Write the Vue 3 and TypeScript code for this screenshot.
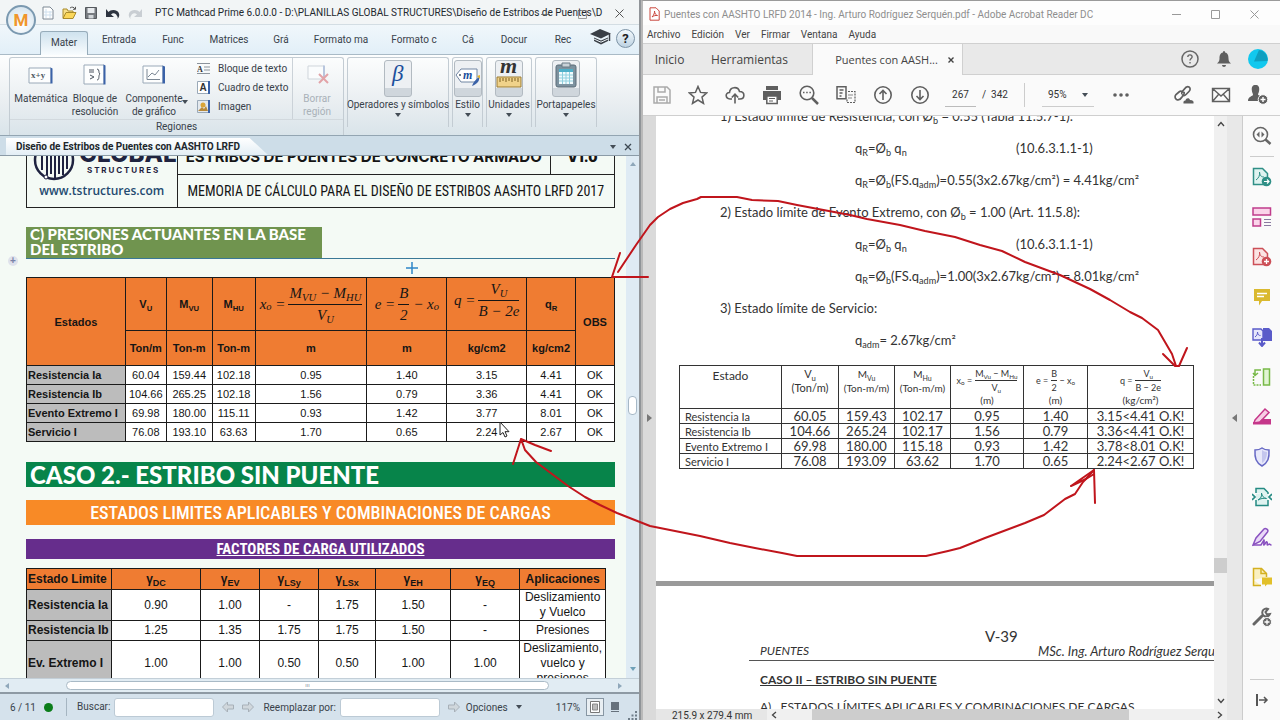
<script setup lang="ts">
interface RibbonTab { label: string; width: number; active?: boolean }

const tabs: RibbonTab[] = [
  { label: 'Mater', width: 48, active: true },
  { label: 'Entrada', width: 62 },
  { label: 'Func', width: 46 },
  { label: 'Matrices', width: 66 },
  { label: 'Grá', width: 38 },
  { label: 'Formato ma', width: 82 },
  { label: 'Formato c', width: 64 },
  { label: 'Cá', width: 44 },
  { label: 'Docur', width: 48 },
  { label: 'Rec', width: 50 },
]

const pressureCols: number[] = [99, 41, 46, 43, 112, 80, 80, 49, 39]
const pressureUnits: string[] = ['Ton/m', 'Ton-m', 'Ton-m', 'm', 'm', 'kg/cm2', 'kg/cm2']
const pressures: string[][] = [
  ['Resistencia Ia', '60.04', '159.44', '102.18', '0.95', '1.40', '3.15', '4.41', 'OK'],
  ['Resistencia Ib', '104.66', '265.25', '102.18', '1.56', '0.79', '3.36', '4.41', 'OK'],
  ['Evento Extremo I', '69.98', '180.00', '115.11', '0.93', '1.42', '3.77', '8.01', 'OK'],
  ['Servicio I', '76.08', '193.10', '63.63', '1.70', '0.65', '2.24', '2.67', 'OK'],
]

const factorCols: number[] = [85, 89, 59, 59, 57, 75, 69, 86]
const factorSubs: string[] = ['DC', 'EV', 'LSy', 'LSx', 'EH', 'EQ']
const factors: string[][] = [
  ['Resistencia Ia', '0.90', '1.00', '-', '1.75', '1.50', '-', 'Deslizamiento\ny Vuelco'],
  ['Resistencia Ib', '1.25', '1.35', '1.75', '1.75', '1.50', '-', 'Presiones'],
  ['Ev. Extremo I', '1.00', '1.00', '0.50', '0.50', '1.00', '1.00', 'Deslizamiento,\nvuelco y\npresiones'],
]

const menus: string[] = ['Archivo', 'Edición', 'Ver', 'Firmar', 'Ventana', 'Ayuda']

const bookCols: number[] = [102, 57, 56, 56, 73, 64, 106]
const bookRows: string[][] = [
  ['Resistencia Ia', '60.05', '159.43', '102.17', '0.95', '1.40', '3.15<4.41 O.K!'],
  ['Resistencia Ib', '104.66', '265.24', '102.17', '1.56', '0.79', '3.36<4.41 O.K!'],
  ['Evento Extremo I', '69.98', '180.00', '115.18', '0.93', '1.42', '3.78<8.01 O.K!'],
  ['Servicio I', '76.08', '193.09', '63.62', '1.70', '0.65', '2.24<2.67 O.K!'],
]

const share = (w: number, all: number[]): string =>
  (w / all.reduce((a, b) => a + b, 0)) * 100 + '%'
</script>

<template>
  <div class="desktop">
    <section class="mathcad" aria-label="PTC Mathcad Prime">
      <header class="mc-title">
        <button class="orb" aria-label="Menú">M</button>
        <div class="quick">
          <button aria-label="Nuevo">
            <svg width="12" height="14" viewBox="0 0 12 14"><path d="M1 1h7l3 3v9H1z" fill="#fff" stroke="#7d8894" /><path d="M4 3v9M8 5v7M2 6h8M2 9h8" stroke="#cfe0ee" /></svg>
          </button>
          <button aria-label="Abrir">
            <svg width="15" height="14" viewBox="0 0 15 14"><path d="M1 12V3h4l1 2h5v2" fill="#f6df8b" stroke="#a98b2c" /><path d="M1 12.500l3-6h10l-3 6z" fill="#fbd75a" stroke="#a98b2c" /><path d="M8 2c2-1.500 4-1 5 1M13.500 .8V3.300H11" fill="none" stroke="#555" /></svg>
          </button>
          <button aria-label="Guardar">
            <svg width="12" height="12" viewBox="0 0 12 12"><path d="M.5.500h11v11H.500z" fill="#777b80" stroke="#55595e" /><path d="M2.500 1h7v5h-7z" fill="#e8ebee" /><path d="M3.500 8h5v3.500h-5z" fill="#d3d7da" /></svg>
          </button>
          <button aria-label="Deshacer">
            <svg width="15" height="11" viewBox="0 0 15 11"><path d="M1 1v8h8L6 6.500c2-2 5-1.500 6 1.500 1 1 1 2 0 3 3-2 3-6 0-8S5 2 3.500 4z" fill="#2d3440" /></svg>
          </button>
          <button aria-label="Rehacer">
            <svg width="15" height="11" viewBox="0 0 15 11"><path d="M14 1v8H6l3-2.500C7 4.500 4 5 3 8c-1 1-1 2 0 3C0 9 0 5 3 3s7-1 8.500 1z" fill="#c9ced3" /></svg>
          </button>
        </div>
        <h1>PTC Mathcad Prime 6.0.0.0 - D:\PLANILLAS GLOBAL STRUCTURES\Diseño de Estribos de Puentes\D</h1>
        <button class="mc-min" aria-label="Minimizar"><svg width="9" height="9" viewBox="0 0 9 9"><path d="M0 4.500h9" stroke="#555" /></svg></button>
        <button class="mc-max" aria-label="Maximizar"><svg width="9" height="9" viewBox="0 0 9 9"><path d="M.5.500h8v8h-8z" stroke="#777" fill="none" /></svg></button>
        <button class="mc-close" aria-label="Cerrar">
          <svg width="9" height="9" viewBox="0 0 9 9"><path d="M.5.500l8 8M8.500.500l-8 8" stroke="#555" fill="none" /></svg>
        </button>
      </header>

      <nav class="mc-tabs">
        <button v-for="t in tabs" :key="t.label" :class="{ active: t.active }" :style="{ width: t.width + 'px' }">{{ t.label }}</button>
        <button class="cap" aria-label="Aprendizaje">
          <svg width="21" height="17" viewBox="0 0 21 17"><path d="M0 5L10 0l11 4.500L11 9.500z" fill="#3a3f46" /><path d="M4 8.500l7 3 7-3v3.500l-7 3.500-7-3.500z" fill="#3a3f46" /><path d="M4 10l7 3.200L18 10" stroke="#eef5fa" fill="none" /><path d="M19.500 5v7" stroke="#3a3f46" stroke-width="1.500" /></svg>
        </button>
        <button class="help" aria-label="Ayuda">?</button>
      </nav>

      <div class="ribbon">
        <fieldset class="group regions">
          <div class="tools">
            <button class="tool t1">
              <svg width="26" height="32" viewBox="0 0 26 32"><path d="M1 10h22v15H1z" fill="#fdfefe" stroke="#9aa9b8" /><path d="M22.500 9.500l2 1v15h-2z" fill="#3a62a8" /><text x="3" y="20" class="ico-serif">x+y</text></svg>
              <span>Matemática</span>
            </button>
            <button class="tool t2">
              <svg width="26" height="32" viewBox="0 0 26 32"><path d="M2 7h20v19H2z" fill="#fdfefe" stroke="#9aa9b8" /><path d="M21.500 6.500l2 1v19h-2z" fill="#3a62a8" /><path d="M7 12h5M7 14h5M8 17l4 2-4 2M15 11c3 0 1 4 3 5-2 1 0 6-3 6" stroke="#4c5560" fill="none" /></svg>
              <span>Bloque de resolución</span>
            </button>
            <button class="tool t3">
              <svg width="26" height="32" viewBox="0 0 26 32"><path d="M2 8h20v17H2z" fill="#fdfefe" stroke="#9aa9b8" /><path d="M21.500 7.500l2.500 1v17h-2.500z" fill="#3a62a8" /><path d="M6 11v10.500h13M7 19l4-4 3 2 4-5" stroke="#7b8794" fill="none" /></svg>
              <span>Componente de gráfico</span>
              <i class="caret"></i>
            </button>
            <div class="stack">
              <button><svg width="14" height="14" viewBox="0 0 14 14"><path d="M0 1.500h13M7 5h6M7 8h6M0 11.500h13" stroke="#8b939b" /><text x="0" y="9.500" class="ico-b">A</text></svg>Bloque de texto</button>
              <button><svg width="14" height="14" viewBox="0 0 14 14"><path d="M.5.500h11v12H.500z" fill="#fff" stroke="#9aa9b8" /><path d="M11 0h2v13h-2z" fill="#3a62a8" /><text x="2.500" y="10" class="ico-a">A</text></svg>Cuadro de texto</button>
              <button><svg width="14" height="14" viewBox="0 0 14 14"><path d="M.5.500h11v12H.500z" fill="#e4e9ee" stroke="#9aa9b8" /><path d="M11 0h2v13h-2z" fill="#3a62a8" /><path d="M1 11l4-4 2 2 2-3 2 5z" fill="#b88a3a" /><circle cx="6" cy="5" r="2.500" fill="#d9a437" /></svg>Imagen</button>
            </div>
            <button class="tool del" disabled>
              <svg width="26" height="32" viewBox="0 0 26 32"><path d="M4 8h16v13H4z" fill="#fafcfd" stroke="#cfd5db" /><path d="M19 7.500h2V21h-2z" fill="#b8c6de" /><path d="M15 16l9 9M24 16l-9 9" stroke="#e2a3a8" stroke-width="2" /></svg>
              <span>Borrar región</span>
            </button>
          </div>
          <legend>Regiones</legend>
        </fieldset>
        <div class="group g-ops">
          <button class="big"><b class="tile"><svg width="26" height="35" viewBox="0 0 26 35"><text x="7" y="20" class="beta">β</text></svg></b>Operadores y símbolos<i class="caret"></i></button>
        </div>
        <div class="group g-est">
          <button class="big"><b class="tile"><svg width="26" height="35" viewBox="0 0 26 35"><path d="M1 14l5-6h16v13H6z" fill="#fff" stroke="#7186a3" /><circle cx="5" cy="14" r="1" fill="#456" /><text x="8" y="18" class="em">m</text><path d="M24 16c1 4-2 7-7 9 1-3 3-6 7-9z" fill="#3a62a8" /><path d="M22 15l3-1v4z" fill="#e4b431" /></svg></b>Estilo<i class="caret"></i></button>
        </div>
        <div class="group g-uni">
          <button class="big"><b class="tile"><svg width="26" height="35" viewBox="0 0 26 35"><text x="4" y="12" class="unit">m</text><path d="M1 16h24v10H1z" fill="#f0d28a" stroke="#9c7c32" /><path d="M4 17v4M7 17v3M10 17v4M13 17v3M16 17v4M19 17v3M22 17v4" stroke="#7b5f20" /></svg></b>Unidades<i class="caret"></i></button>
        </div>
        <div class="group g-clip">
          <button class="big"><b class="tile"><svg width="26" height="35" viewBox="0 0 26 35"><rect x="3" y="4" width="20" height="22" rx="2" fill="#7d929f" stroke="#5c6d78" /><path d="M6 8h14v15H6z" fill="#f2fbfd" /><path d="M6 8h14v3H6z" fill="#4fb0c9" /><path d="M9.500 11v12M13 11v12M16.500 11v12M6 14h14M6 17h14M6 20h14" stroke="#8fd0df" /><path d="M9 2h8v4H9z" fill="#c9d2d8" stroke="#6a7a85" /></svg></b>Portapapeles<i class="caret"></i></button>
        </div>
      </div>

      <div class="docstrip">
        <button class="doctab">Diseño de Estribos de Puentes con AASHTO LRFD</button>
        <button class="ds-btn" aria-label="Lista de documentos"><i class="caret"></i></button>
        <button class="ds-btn" aria-label="Cerrar documento"><svg width="8" height="8" viewBox="0 0 8 8"><path d="M1 1l6 6M7 1L1 7" stroke="#3d4852" stroke-width="1.300" /></svg></button>
      </div>

      <div class="mc-body">
        <main class="sheet">
          <span class="grip">+</span>
          <table class="masthead">
            <colgroup><col style="width: 25.600%" /><col /><col style="width: 10.900%" /></colgroup>
            <tbody>
              <tr>
                <td rowspan="2" class="brand">
                  <div class="brandrow">
                    <svg width="42" height="42" viewBox="0 0 42 42"><circle cx="21" cy="21" r="19" fill="none" stroke="#1f2340" stroke-width="2.500" /><path d="M9 9v22M14 6v32M18 6v29M22 4v35M26 8v27M30 6v30M34 10v20" stroke="#1f2340" stroke-width="2" fill="none" /><circle cx="13" cy="38" r="2" fill="#fff" stroke="#1f2340" /></svg>
                    <div><strong>GLOBAL</strong><small>S T R U C T U R E S</small></div>
                  </div>
                  <a href="#">www.tstructures.com</a>
                </td>
                <td class="mh-title">ESTRIBOS DE PUENTES DE CONCRETO ARMADO</td>
                <td class="mh-ver">V1.0</td>
              </tr>
              <tr><td colspan="2" class="memo">MEMORIA DE CÁLCULO PARA EL DISEÑO DE ESTRIBOS AASHTO LRFD 2017</td></tr>
            </tbody>
          </table>

          <div class="section-c"><h2>C) PRESIONES ACTUANTES EN LA BASE DEL ESTRIBO</h2></div>
          <div class="crossline"><svg width="12" height="12" viewBox="0 0 12 12"><path d="M6 0v12M0 6h12" stroke="#2e86c8" stroke-width="1.500" /></svg></div>

          <table class="grid pressures">
            <colgroup><col v-for="(w, i) in pressureCols" :key="i" :style="{ width: share(w, pressureCols) }" /></colgroup>
            <thead>
              <tr class="symbols">
                <th rowspan="2">Estados</th>
                <th>V<sub>U</sub></th>
                <th>M<sub>VU</sub></th>
                <th>M<sub>HU</sub></th>
                <th class="math"><span class="eq">x<sub>o</sub>&nbsp;= <span class="frac"><span>M<sub>VU</sub> − M<sub>HU</sub></span><span>V<sub>U</sub></span></span></span></th>
                <th class="math"><span class="eq">e&nbsp;= <span class="frac"><span>B</span><span>2</span></span>&nbsp;− x<sub>o</sub></span></th>
                <th class="math high"><span class="eq">q&nbsp;= <span class="frac"><span>V<sub>U</sub></span><span>B − 2e</span></span></span></th>
                <th>q<sub>R</sub></th>
                <th rowspan="2">OBS</th>
              </tr>
              <tr class="units"><th v-for="(u, i) in pressureUnits" :key="i">{{ u }}</th></tr>
            </thead>
            <tbody>
              <tr v-for="r in pressures" :key="r[0]">
                <th scope="row">{{ r[0] }}</th>
                <td v-for="(c, i) in r.slice(1)" :key="i">{{ c }}</td>
              </tr>
            </tbody>
          </table>

          <h2 class="bar caso">CASO 2.- ESTRIBO SIN PUENTE</h2>
          <h3 class="bar estados">ESTADOS LIMITES APLICABLES Y COMBINACIONES DE CARGAS</h3>
          <h3 class="bar factores">FACTORES DE CARGA UTILIZADOS</h3>

          <table class="grid factors">
            <colgroup><col v-for="(w, i) in factorCols" :key="i" :style="{ width: share(w, factorCols) }" /></colgroup>
            <thead>
              <tr>
                <th class="lead">Estado Limite</th>
                <th v-for="s in factorSubs" :key="s" class="gamma">γ<sub>{{ s }}</sub></th>
                <th>Aplicaciones</th>
              </tr>
            </thead>
            <tbody>
              <tr v-for="r in factors" :key="r[0]">
                <th scope="row">{{ r[0] }}</th>
                <td v-for="(c, i) in r.slice(1)" :key="i">{{ c }}</td>
              </tr>
            </tbody>
          </table>
        </main>
        <div class="vbar"><i class="up"></i><i class="vthumb"></i><i class="down"></i></div>
      </div>

      <div class="hbar"><i class="left"></i><div class="hthumb">ııı</div><i class="right"></i></div>

      <footer class="status">
        <span class="pages">6 / 11</span>
        <i class="dot"></i>
        <label for="find">Buscar:</label>
        <input id="find" type="text" />
        <button class="arr" aria-label="Anterior"><svg width="12" height="12" viewBox="0 0 12 12"><path d="M.5 6l5-5v3h6v4h-6v3z" fill="#d0d7dc" stroke="#a7b0b8" /></svg></button>
        <button class="arr" aria-label="Siguiente"><svg width="12" height="12" viewBox="0 0 12 12"><path d="M11.500 6l-5-5v3h-6v4h6v3z" fill="#d0d7dc" stroke="#a7b0b8" /></svg></button>
        <label for="repl">Reemplazar por:</label>
        <input id="repl" type="text" />
        <button class="arr" aria-label="Reemplazar"><svg width="12" height="12" viewBox="0 0 12 12"><path d="M11.500 6l-5-5v3h-6v4h6v3z" fill="#d0d7dc" stroke="#a7b0b8" /></svg></button>
        <button class="opts">Opciones <i class="caret"></i></button>
        <span class="pct">117%</span>
        <button class="view on" aria-label="Vista de página"><svg width="10" height="12" viewBox="0 0 10 12"><path d="M.5.500h9v11h-9z" fill="#fff" stroke="#777" /><path d="M2.500 3h5v6h-5z" fill="#bbb" stroke="#888" /></svg></button>
        <button class="view" aria-label="Vista de borrador"><svg width="10" height="12" viewBox="0 0 10 12"><path d="M1 1h8v8H1z" fill="#66717c" /><path d="M1 10.500h8" stroke="#66717c" /></svg></button>
        <svg class="resize" width="9" height="9" viewBox="0 0 9 9"><path d="M7 0h2v2H7zM7 3.500h2v2H7zM7 7h2v2H7zM3.500 3.500h2v2h-2zM3.500 7h2v2h-2zM0 7h2v2H0z" fill="#6f7d89" /></svg>
      </footer>
    </section>

    <section class="acrobat" aria-label="Adobe Acrobat Reader DC">
      <header class="ac-title">
        <svg width="11" height="14" viewBox="0 0 11 14"><path d="M1 .8h6l3.200 3.200v9.200H1z" fill="#fff" stroke="#c9463d" /><path d="M3 10c2-2 2.600-4 2.500-6 .2 3 1.500 4 3 4.500-2-.3-4 .3-5.500 1.500z" fill="none" stroke="#c9463d" /></svg>
        <h1>Puentes con AASHTO LRFD 2014 - Ing. Arturo Rodríguez Serquén.pdf - Adobe Acrobat Reader DC</h1>
        <button aria-label="Minimizar"><svg width="9" height="9" viewBox="0 0 9 9"><path d="M0 4.500h9" stroke="#999" /></svg></button>
        <button aria-label="Maximizar"><svg width="9" height="9" viewBox="0 0 9 9"><path d="M.5.500h8v8h-8z" stroke="#999" fill="none" /></svg></button>
        <button aria-label="Cerrar"><svg width="9" height="9" viewBox="0 0 9 9"><path d="M.5.500l8 8M8.500.500l-8 8" stroke="#999" /></svg></button>
      </header>
      <nav class="ac-menu"><button v-for="m in menus" :key="m">{{ m }}</button></nav>
      <nav class="ac-tabs">
        <button class="home">Inicio</button>
        <button class="toolsTab">Herramientas</button>
        <div class="file"><button>Puentes con AASH...</button><button aria-label="Cerrar pestaña"><svg width="6" height="6" viewBox="0 0 6 6"><path d="M.5.500l5 5M5.500.500l-5 5" stroke="#444" stroke-width="1.400" /></svg></button></div>
        <div class="account">
          <button aria-label="Ayuda"><svg width="20" height="20" viewBox="0 0 20 20"><circle cx="10" cy="10" r="8" fill="none" stroke="#666" stroke-width="1.500" /><path d="M7.800 8c.2-3 4.600-2.600 4.300 0-.2 1.500-2.100 1.500-2.100 3.500M10 13v1.500" fill="none" stroke="#666" stroke-width="1.400" /></svg></button>
          <button aria-label="Notificaciones"><svg width="16" height="18" viewBox="0 0 16 18"><path d="M8 1c1 0 1 1 1 1.500 3 .7 3.500 3 3.500 6 0 3 1 3.500 2.500 5H1c1.500-1.500 2.500-2 2.500-5 0-3 .5-5.300 3.500-6C7 2 7 1 8 1z" fill="#5f5f5f" /><path d="M6 15h4c0 2.500-4 2.500-4 0z" fill="#5f5f5f" /></svg></button>
          <button aria-label="Cuenta"><svg width="20" height="20" viewBox="0 0 20 20"><circle cx="10" cy="10" r="10" fill="#12c8ee" /><path d="M11 1a9.500 9.500 0 0 1 8.500 11L6 12.500z" fill="#0f9fc0" /></svg></button>
        </div>
      </nav>
      <div class="ac-toolbar">
        <button aria-label="Guardar"><svg width="18" height="18" viewBox="0 0 18 18"><path d="M1 1h13l3 3v13H1z" fill="none" stroke="#aaa" stroke-width="1.500" /><path d="M5 1v5h7V1M4 17v-6h10v6M6 14h6" fill="none" stroke="#aaa" stroke-width="1.500" /></svg></button>
        <button aria-label="Favorito"><svg width="20" height="20" viewBox="0 0 20 20"><path d="M10 1.500l2.500 5.900 6.300.5-4.800 4.200 1.500 6.300L10 15l-5.500 3.400L6 12.100 1.200 7.900l6.300-.5z" fill="none" stroke="#5f5f5f" stroke-width="1.500" /></svg></button>
        <button aria-label="Subir"><svg width="20" height="20" viewBox="0 0 20 20"><path d="M7 14H5C0 13.500 0 7.500 4.500 7.500 5 1.500 13 1 14.500 6.500c6 0 5.500 7.500.5 7.500h-2" fill="none" stroke="#5f5f5f" stroke-width="1.600" /><path d="M10 18.500V10M6.800 12.500L10 9.200l3.200 3.300" fill="none" stroke="#5f5f5f" stroke-width="1.600" /></svg></button>
        <button aria-label="Imprimir"><svg width="20" height="20" viewBox="0 0 20 20"><path d="M4 1h12v4H4zM1 6h18v9h-3v-3H4v3H1z" fill="#5f5f5f" /><path d="M4.800 11h10.400v7.500H4.800z" fill="#fff" stroke="#5f5f5f" stroke-width="1.500" /><path d="M7 13.500h6M7 16h4" stroke="#5f5f5f" /></svg></button>
        <button aria-label="Buscar"><svg width="20" height="20" viewBox="0 0 20 20"><circle cx="8" cy="8" r="6.800" fill="none" stroke="#5f5f5f" stroke-width="1.600" /><path d="M13 13l6 6" stroke="#5f5f5f" stroke-width="2.500" /><path d="M4 7.500h1.500M7.200 7.500h1.500M10.400 7.500h1.500" stroke="#5f5f5f" stroke-width="1.500" /></svg></button>
        <button aria-label="Comparar"><svg width="20" height="20" viewBox="0 0 20 20"><path d="M1 1.800h9v12H1zM3.500 5h4M3.500 8h3M3.500 11h2" fill="none" stroke="#5f5f5f" stroke-width="1.500" /><path d="M12 6.500h7v11h-8v-3" fill="none" stroke="#5f5f5f" stroke-width="1.200" stroke-dasharray="2 1" /><path d="M12 10h5M12 13h4" stroke="#888" /></svg></button>
        <button aria-label="Página anterior"><svg width="20" height="20" viewBox="0 0 20 20"><circle cx="10" cy="10" r="8.200" fill="none" stroke="#5f5f5f" stroke-width="1.600" /><path d="M10 15V5.800M6.500 9L10 5.500 13.500 9" fill="none" stroke="#5f5f5f" stroke-width="1.600" /></svg></button>
        <button aria-label="Página siguiente"><svg width="20" height="20" viewBox="0 0 20 20"><circle cx="10" cy="10" r="8.200" fill="none" stroke="#5f5f5f" stroke-width="1.600" /><path d="M10 5v9.200M6.500 11l3.500 3.500 3.500-3.500" fill="none" stroke="#5f5f5f" stroke-width="1.600" /></svg></button>
        <input class="page" aria-label="Página" value="267" />
        <span class="total">/&nbsp; 342</span>
        <div class="zoom"><select aria-label="Zoom"><option>95%</option></select><i class="caret"></i></div>
        <button class="more" aria-label="Más"><svg width="16" height="4" viewBox="0 0 16 4"><circle cx="2" cy="2" r="1.800" fill="#5f5f5f" /><circle cx="8" cy="2" r="1.800" fill="#5f5f5f" /><circle cx="14" cy="2" r="1.800" fill="#5f5f5f" /></svg></button>
        <div class="sharing">
          <button aria-label="Vínculo"><svg width="20" height="20" viewBox="0 0 20 20"><g fill="none" stroke="#5f5f5f" stroke-width="1.700"><path d="M8 9c-1-2 1-3 2-4.500C12 1.500 13.500 1 15 2s1.500 3 0 4.500L12 9.500c-1.500 1.500-3 1-4 0" /><path d="M10 7c1 2-1 3.500-2 5-1.500 2.500-3.500 3.500-5.500 2.500C.5 13 .8 11 2 9.500L5 7c1.500-1.300 3-1 4.500.5" /></g><path d="M9.500 18.500c-.5-3 1.500-3 2-3 .5-3 4-3 4.500-.5 3 0 4 1.500 3.500 3.500z" fill="#5f5f5f" /></svg></button>
          <button aria-label="Correo"><svg width="20" height="16" viewBox="0 0 20 16"><path d="M1.500 1.500h17v13h-17zM1.500 1.500L10 9l8.500-7.500M1.500 14.500l6-7M18.500 14.500l-6-7" fill="none" stroke="#5f5f5f" stroke-width="1.400" /></svg></button>
          <button aria-label="Compartir"><svg width="20" height="20" viewBox="0 0 20 20"><path d="M7.500 0c3 0 4 2 3.700 5C11 8 10 8.500 10 9.500c0 1 2 1 3.500 2L10 16H0c0-5 5-4.500 5-6.500C5 8.500 4 8 3.800 5 3.500 2 4.500 0 7.500 0z" fill="#5f5f5f" /><circle cx="15" cy="14.500" r="4.800" fill="#5f5f5f" stroke="#fafafa" /><path d="M15 12v5M12.500 14.500h5" stroke="#fff" stroke-width="1.400" /></svg></button>
        </div>
      </div>

      <div class="ac-body">
        <button class="gutter gl" aria-label="Mostrar panel"><i></i></button>
        <div class="viewer">
          <div class="viewrow">
            <article class="pdf">
              <div class="pg one">
                <p>1) Estado límite de Resistencia, con Ø<sub>b</sub> = 0.55 (Tabla 11.5.7-1):</p>
                <p class="f"><span>q<sub>R</sub>=Ø<sub>b</sub> q<sub>n</sub></span><span>(10.6.3.1.1-1)</span></p>
                <p class="f">q<sub>R</sub>=Ø<sub>b</sub>(FS.q<sub>adm</sub>)=0.55(3x2.67kg/cm²) = 4.41kg/cm²</p>
                <p>2) Estado límite de Evento Extremo, con Ø<sub>b</sub> = 1.00 (Art. 11.5.8):</p>
                <p class="f"><span>q<sub>R</sub>=Ø<sub>b</sub> q<sub>n</sub></span><span>(10.6.3.1.1-1)</span></p>
                <p class="f">q<sub>R</sub>=Ø<sub>b</sub>(FS.q<sub>adm</sub>)=1.00(3x2.67kg/cm²) = 8.01kg/cm²</p>
                <p>3) Estado límite de Servicio:</p>
                <p class="f">q<sub>adm</sub>= 2.67kg/cm²</p>
                <table class="book">
                  <colgroup><col v-for="(w, i) in bookCols" :key="i" :style="{ width: share(w, bookCols) }" /></colgroup>
                  <thead>
                    <tr>
                      <th>Estado</th>
                      <th>V<sub>u</sub><br />(Ton/m)</th>
                      <th>M<sub>Vu</sub><br />(Ton-m/m)</th>
                      <th>M<sub>Hu</sub><br />(Ton-m/m)</th>
                      <th class="bm"><span class="eq">x<sub>o</sub>&nbsp;= <span class="frac"><span>M<sub>Vu</sub> − M<sub>Hu</sub></span><span>V<sub>u</sub></span></span></span>(m)</th>
                      <th class="bm"><span class="eq">e&nbsp;= <span class="frac"><span>B</span><span>2</span></span>&nbsp;− x<sub>o</sub></span>(m)</th>
                      <th class="bm"><span class="eq">q&nbsp;= <span class="frac"><span>V<sub>u</sub></span><span>B − 2e</span></span></span>(kg/cm²)</th>
                    </tr>
                  </thead>
                  <tbody>
                    <tr v-for="r in bookRows" :key="r[0]"><td v-for="(c, i) in r" :key="i">{{ c }}</td></tr>
                  </tbody>
                </table>
              </div>
              <div class="pg two">
                <p class="num">V-39</p>
                <div class="running"><em>PUENTES</em><em>MSc. Ing. Arturo Rodríguez Serquén</em></div>
                <h2>CASO II – ESTRIBO SIN PUENTE</h2>
                <p class="next">A) &nbsp; ESTADOS LÍMITES APLICABLES Y COMBINACIONES DE CARGAS</p>
              </div>
            </article>
            <div class="ac-vbar">
              <svg width="8" height="6" viewBox="0 0 8 6"><path d="M1 5l3-3.500L7 5" fill="none" stroke="#444" stroke-width="1.300" /></svg>
              <i></i>
              <svg width="8" height="6" viewBox="0 0 8 6"><path d="M1 1l3 3.500L7 1" fill="none" stroke="#444" stroke-width="1.300" /></svg>
            </div>
          </div>
          <div class="ac-hbar">
            <span>215.9 x 279.4 mm</span>
            <button aria-label="Izquierda"><svg width="6" height="8" viewBox="0 0 6 8"><path d="M5 1L1.500 4 5 7" fill="none" stroke="#444" stroke-width="1.300" /></svg></button>
            <i></i>
            <button aria-label="Derecha"><svg width="6" height="8" viewBox="0 0 6 8"><path d="M1 1l3.500 3L1 7" fill="none" stroke="#444" stroke-width="1.300" /></svg></button>
          </div>
        </div>
        <button class="gutter gr" aria-label="Ocultar panel"><i></i></button>
        <aside class="rail">
          <button aria-label="Buscar herramientas"><svg width="20" height="20" viewBox="0 0 20 20"><circle cx="8.500" cy="8.500" r="7" fill="none" stroke="#666" stroke-width="1.600" /><path d="M13.500 13.500L18.500 18" stroke="#666" stroke-width="2.500" /><path d="M7.500 5.500v6l-3-3zM9.500 5.500v6l3-3z" fill="#666" /></svg></button>
          <hr />
          <button aria-label="Exportar PDF"><svg width="20" height="20" viewBox="0 0 20 20"><path d="M1.500 1.500h9l5 5v11h-14z" fill="#dff3f0" stroke="#2f8f86" stroke-width="1.500" /><path d="M4 13c3-2 4-5 3.500-8 .5 4 2 5 4.500 5" fill="none" stroke="#2f8f86" /><circle cx="14.500" cy="14.500" r="4.800" fill="#2f8f86" /><path d="M12 14.500h5M15 12.500l2 2-2 2" fill="none" stroke="#fff" stroke-width="1.200" /></svg></button>
          <button aria-label="Organizar páginas"><svg width="20" height="20" viewBox="0 0 20 20"><path d="M1 1h17.500v7H1zM1 12h7.500v7H1z" fill="#fbd4ea" stroke="#c03c8c" stroke-width="1.500" /><path d="M12 12.500h7M12 15.500h7M12 18.500h7" stroke="#8a7aa0" /></svg></button>
          <button aria-label="Crear PDF"><svg width="20" height="20" viewBox="0 0 20 20"><path d="M1.500 1.500h9l5 5v11h-14z" fill="#fbe3e3" stroke="#cc4f57" stroke-width="1.500" /><path d="M4 13c3-2 4-5 3.500-8 .5 4 2 5 4.500 5" fill="none" stroke="#cc4f57" /><circle cx="14.500" cy="14.500" r="4.800" fill="#cc4f57" /><path d="M14.500 12v5M12 14.500h5" stroke="#fff" stroke-width="1.300" /></svg></button>
          <button aria-label="Comentar"><svg width="20" height="20" viewBox="0 0 20 20"><path d="M2 2h16v12h-8l-3 4.500V14H2z" fill="#dab92f" /><path d="M5 6.500h10M5 9.500h7" stroke="#fff" stroke-width="1.400" /></svg></button>
          <button aria-label="Combinar"><svg width="20" height="20" viewBox="0 0 20 20"><path d="M11 1h6l3 3v10h-9z" fill="#5a5bc9" /><path d="M1 2h8l2 2v9H1z" fill="#e6e6fb" stroke="#5a5bc9" stroke-width="1.400" /><path d="M3 10c2-1.500 2.500-3 2.500-5 .3 3 1.500 3.500 3 3.500" fill="none" stroke="#5a5bc9" /><path d="M10 11v7M7 15.500l3 3.500 3-3.500" fill="none" stroke="#5a5bc9" stroke-width="2" /></svg></button>
          <button aria-label="Rotar"><svg width="20" height="20" viewBox="0 0 20 20"><path d="M11.500 2h6v16h-6z" fill="#e1f5d3" stroke="#78b948" stroke-width="1.500" /><path d="M1.500 9v9H9" fill="none" stroke="#78b948" stroke-width="1.500" stroke-dasharray="2 1" /><path d="M9 3H3v5M1 6l2 2.500L6 6" fill="none" stroke="#78b948" stroke-width="1.500" /></svg></button>
          <button aria-label="Censurar"><svg width="20" height="20" viewBox="0 0 20 20"><path d="M3 13L13 2l4 3.500L8 15l-6 1z" fill="#f8cde4" stroke="#c5378a" stroke-width="1.500" /><path d="M1 15h6l3-3h9v5.500H1z" fill="#c5378a" /></svg></button>
          <button aria-label="Proteger"><svg width="20" height="20" viewBox="0 0 20 20"><path d="M10 1c2 1.500 4.500 2 7 2 .5 8-1 12.500-7 16C4 15.500 2.500 11 3 3c2.500 0 5-.5 7-2z" fill="#e7e8fa" stroke="#6668c4" stroke-width="1.500" /><path d="M10 3v13c3-2 5-5 5-11-2 0-3.500-.8-5-2z" fill="#c4c6ee" /></svg></button>
          <button aria-label="Comprimir"><svg width="20" height="20" viewBox="0 0 20 20"><path d="M4 6V1.500h8l4 4V7M4 13v5.500h12V13" fill="#dff3f0" stroke="#258b83" stroke-width="1.500" /><path d="M4 7h12v6H4z" fill="#dff3f0" /><path d="M0 7l3 3-3 3M20 7l-3 3 3 3" fill="none" stroke="#258b83" stroke-width="1.700" /><path d="M6 13c3-1.500 4-4 3.500-7 .5 3 2 5 5 5.500-3-.5-6 0-8.500 1.500z" fill="none" stroke="#258b83" /></svg></button>
          <button aria-label="Rellenar y firmar"><svg width="20" height="20" viewBox="0 0 20 20"><path d="M1 18l3-7L12 2c1.500-1.500 5 1 3.500 3L8 14.500z" fill="#ead9f8" stroke="#8a52c0" stroke-width="1.500" /><path d="M1 18h8l3-5c1 1-1 5 0 5s2-4 3-3-.5 3 .5 3 1.500-1.500 2-1 .5 1 2 1" fill="none" stroke="#8a52c0" stroke-width="1.500" /></svg></button>
          <button aria-label="Enviar comentarios"><svg width="20" height="20" viewBox="0 0 20 20"><path d="M1.500 13V1.500h8l5 5V10M1.500 13v5.500H9" fill="#faf0c0" stroke="#d4b020" stroke-width="1.500" /><path d="M9 1.500v5h5.500" fill="none" stroke="#d4b020" stroke-width="1.500" /><path d="M10 10.500h10v7h-5l-2 2v-2h-3z" fill="#e2c02a" /></svg></button>
          <button aria-label="Más herramientas"><svg width="20" height="20" viewBox="0 0 20 20"><path d="M2 17L10 9" stroke="#666" stroke-width="3" stroke-linecap="round" /><path d="M16 2a4 4 0 1 0 2 5l-3 .5L13.500 5z" fill="none" stroke="#666" stroke-width="2" /><circle cx="15" cy="15" r="4.500" fill="#666" stroke="#fafafa" /><path d="M15 12.500v5M12.500 15h5" stroke="#fff" stroke-width="1.300" /></svg></button>
          <span class="fill"></span>
          <hr />
          <button aria-label="Contraer"><svg width="14" height="14" viewBox="0 0 14 14"><path d="M2 1v12" stroke="#555" stroke-width="2" /><path d="M4 7h8M9 4l3 3-3 3" fill="none" stroke="#555" stroke-width="1.500" /></svg></button>
        </aside>
      </div>
    </section>

    <svg class="ink" viewBox="0 0 1280 720" preserveAspectRatio="none" aria-hidden="true">
      <g fill="none" stroke="#c0151c" stroke-width="2" stroke-linecap="round" stroke-linejoin="round">
        <path d="M620 253L612 277L648 277M618 272L636 245L650 225L658 217L670 209L683 203L697 199L701 197H737L752 200L778 201L797 205L850 215L867 219L900 225L925 231L955 237L980 245L1002 251L1025 262L1060 275L1090 289L1110 300L1130 312L1142 318L1158 330L1165 342L1172 354L1176 366" />
        <path d="M1163 354L1175 366H1179L1187 348" />
        <path d="M513 464L521 439L535 445L551 451M521 439L525 450L536 462L556 477L568 486L585 497L600 505L617 513L650 526L690 534L700 536L730 543L755 548L782 553L797 556H926L948 551L960 548L985 538L1025 523L1044 515L1065 499L1075 494L1083 482L1094 470" />
        <path d="M1071 486L1094 470L1095 503M1071 486L1086 479L1094 474" />
      </g>
      <path d="M500 422v13l3-2.500 2 4.500 2-1-2-4.300h4z" fill="#fff" stroke="#222" stroke-width="1" />
    </svg>
  </div>
</template>

<style>
html, body { margin: 0; }
</style>

<style scoped>
* { box-sizing: border-box; }
.desktop { position: relative; display: grid; grid-template-columns: 641fr 639fr; height: 100vh; overflow: hidden; font-family: Roboto, "Open Sans", sans-serif; font-size: 10px; color: #39424b; background: #c8c8c8; }
button, input, select { font: inherit; color: inherit; background: none; border: 0; padding: 0; margin: 0; }
button { display: inline-flex; align-items: center; justify-content: center; white-space: nowrap; }
h1, h2, h3, p { margin: 0; font-weight: 400; }
svg { flex: none; display: block; }
sub { font-size: 70%; line-height: 0; vertical-align: baseline; position: relative; top: 3px; }
.caret { display: inline-block; flex: none; border: 3px solid transparent; border-top: 4px solid #444d56; border-bottom: 0; }
.ink { position: absolute; inset: 0; width: 100%; height: 100%; pointer-events: none; }

/* Mathcad window */
.mathcad { display: flex; flex-direction: column; min-width: 0; min-height: 0; border-right: 2px solid #909498; background: #e6f0f6; }
.mc-title { position: relative; display: flex; align-items: center; height: 25px; flex: none; background: #f2f5f6; border-bottom: 1px solid #d3dde3; padding: 2px 14px 0 42px; }
.orb { position: absolute; left: 6px; top: 5px; width: 30px; height: 30px; border-radius: 50%; border: 2px solid #7b99b0; background: radial-gradient(circle at 50% 70%, #fff, #cfe0ec); color: #f0962c; font-weight: 700; font-size: 17px; z-index: 1; }
.quick { display: flex; align-items: center; gap: 8px; width: 113px; flex: none; }
.mc-title h1 { flex: 1; min-width: 0; font-size: 10px; line-height: 16px; color: #22282e; white-space: nowrap; }
.mc-close { width: 12px; margin-left: 16px; }
.mc-min, .mc-max { position: absolute; top: 10px; opacity: .7; }
.mc-min { right: 89px; }
.mc-max { right: 52px; }
.mc-tabs { display: flex; height: 30px; flex: none; padding-left: 40px; background: linear-gradient(#f0f7fb, #e2eff8); border-bottom: 1px solid #a9bac6; align-items: flex-end; }
.mc-tabs button { height: 29px; overflow: hidden; }
.mc-tabs .active { height: 24px; padding-bottom: 3px; border: 1px solid #97acba; border-bottom: 0; border-radius: 3px 3px 0 0; background: linear-gradient(#cfe2ee, #f8fcfe); margin-bottom: -1px; }
.mc-tabs .cap { width: 24px; padding-bottom: 4px; }
.mc-tabs .help { width: 19px; height: 19px; margin: 0 0 6px 4px; border: 1px solid #7c93a6; border-radius: 50%; background: linear-gradient(#f5fafd, #bdd2e2); font-weight: 700; font-size: 13px; color: #222; }
.ribbon { display: flex; height: 81px; flex: none; gap: 3px; padding: 2px 0 0 9px; background: linear-gradient(#fdfefe, #e9eef1 60%, #d9e4ea); border-bottom: 1px solid #93a5b2; }
.group { border: 1px solid #c3ccd3; border-bottom: 0; border-radius: 3px 3px 0 0; margin: 0; padding: 0; min-width: 0; height: 70px; display: flex; justify-content: center; }
.regions { width: 335px; height: 78px; display: flex; flex-direction: column; justify-content: flex-start; }
.regions legend { order: 2; float: left; width: 100%; padding: 0; text-align: center; line-height: 14px; border-top: 1px solid #d2d9de; }
.tools { display: flex; height: 61px; }
.tool { flex-direction: column; justify-content: flex-start; align-items: center; white-space: normal; line-height: 13px; text-align: center; position: relative; }
.t1 { width: 62px; }
.t2 { width: 46px; }
.t3 { width: 74px; padding: 0 8px 0 6px; }
.t3 .caret { position: absolute; right: 4px; bottom: 15px; }
.tool svg { margin-bottom: 2px; }
.stack { display: flex; flex-direction: column; width: 101px; padding: 1px 0 0 5px; border-right: 1px solid #cbd2d8; }
.stack button { height: 19px; gap: 7px; justify-content: flex-start; }
.del { width: 48px; color: #a9b1b8; }
.g-ops { width: 102px; }
.g-est { width: 31px; }
.g-uni { width: 46px; }
.g-clip { width: 62px; }
.big { flex-direction: column; justify-content: flex-start; padding-top: 2px; line-height: 15px; }
.tile { display: block; width: 28px; height: 37px; border: 1px solid #b2bac1; border-radius: 3px; background: linear-gradient(#edf0f3 78%, #cfd6dc 78%); }
.big .caret { margin-top: 1px; }
.ico-serif { font: 700 9px "Liberation Serif", serif; fill: #4c5560; }
.ico-b { font: 700 8px "Liberation Serif", serif; fill: #333; }
.ico-a { font: 700 10px "Liberation Sans", sans-serif; fill: #333; }
.beta { font: italic 23px "Liberation Serif", serif; fill: #1c4f9c; }
.em { font: italic 700 12px "Liberation Serif", serif; fill: #1c4f9c; }
.unit { font: italic 700 22px "Liberation Serif", serif; fill: #333; }
.docstrip { display: flex; height: 20px; flex: none; align-items: flex-end; background: #cddde8; border-bottom: 1px solid #8b9ba7; padding-right: 4px; }
.doctab { height: 17px; width: 262px; margin-left: 6px; margin-right: auto; padding-left: 10px; justify-content: flex-start; background: linear-gradient(#fff, #e3eef5); clip-path: polygon(0 0, 93% 0, 100% 100%, 0 100%); font-weight: 700; color: #20262b; }
.ds-btn { width: 15px; height: 17px; }

.mc-body { flex: 1; min-height: 0; display: flex; }
.sheet { position: relative; flex: 1; min-width: 0; overflow: hidden; background: #f4faf5; padding: 0 11px 0 26px; font-family: "Liberation Sans", Arial, sans-serif; color: #151515; }
.grip { position: absolute; left: 8px; top: 100px; width: 10px; line-height: 10px; text-align: center; border-radius: 50%; background: #dfe2ec; color: #7a83a8; font-size: 10px; font-weight: 700; }
table { border-collapse: collapse; table-layout: fixed; width: 100%; }
.masthead { margin-top: -18px; }
.masthead td { border: 1px solid #222; padding: 0; white-space: nowrap; overflow: hidden; }
.masthead tr:first-child { height: 36px; }
.masthead tr + tr { height: 33px; }
.brand { vertical-align: top; text-align: center; }
.brandrow { display: flex; height: 43px; padding: 0 0 0 6px; gap: 4px; color: #1f2340; text-align: left; }
.brandrow div { display: flex; flex-direction: column; justify-content: flex-end; padding-bottom: 6px; }
.brandrow strong { font: 800 24px/22px Inter, sans-serif; }
.brandrow small { font: 700 8px/11px Inter, sans-serif; padding-left: 8px; white-space: pre; }
.brand a { font: 600 12px/17px "Open Sans", sans-serif; color: #244a70; text-decoration: none; }
.mh-title { font: 700 15px/18px Inter, "Liberation Sans", sans-serif; text-align: center; }
.mh-ver { font: 900 13px/18px Inter, sans-serif; text-align: center; }
.memo { font-family: "Roboto Condensed", "Liberation Sans", sans-serif; font-size: 14px; text-align: center; }
.section-c { margin-top: 19px; border-bottom: 1px solid #3a7896; height: 32px; }
.section-c h2 { width: 50.200%; height: 31px; overflow: hidden; padding: 0 4px; background: #70944f; color: #fff; font: 900 15px/15px Lato, sans-serif; }
.crossline { height: 18px; padding: 3px 0 0 380px; }
.grid th, .grid td { border: 1px solid #1a1a1a; padding: 0; text-align: center; font-size: 11px; line-height: 14px; }
.grid td { background: #fff; white-space: pre-line; }
.grid thead th { background: #ef7c32; font-weight: 700; }
.grid tbody th { background: #bcbcbc; text-align: left; padding-left: 1px; white-space: nowrap; font-weight: 700; }
.symbols { height: 53px; }
.units { height: 35px; }
.pressures tbody tr { height: 19px; }
.pressures .math { font-family: "Liberation Serif", serif; font-style: italic; font-weight: 400; font-size: 15px; line-height: 17px; }
.pressures .high { padding-bottom: 8px; }
.eq { display: inline-flex; align-items: center; white-space: nowrap; }
.eq sub { align-self: center; }
.frac { display: inline-flex; flex-direction: column; text-align: center; margin-left: 3px; }
.frac > span:first-child { border-bottom: 1px solid currentColor; padding: 0 1px 2px; }
.frac > span + span { padding-top: 2px; }
.bar { color: #fff; }
.caso { margin-top: 20px; height: 25px; background: #07844a; font: 900 24px/25px Lato, sans-serif; padding-left: 4px; }
.estados { margin-top: 13px; height: 25px; background: #f88a26; text-align: center; font: 500 18px/25px "Roboto Condensed", "Liberation Sans", sans-serif; white-space: nowrap; }
.factores { margin-top: 14px; height: 20px; background: #662d8c; text-align: center; font: 700 15px/20px "Roboto Condensed", "Liberation Sans", sans-serif; text-decoration: underline; }
.factors { width: 98.500%; margin-top: 9px; }
.factors th, .factors td { font-size: 12px; line-height: 15px; }
.factors thead tr { height: 21px; }
.factors tbody tr { height: 20px; }
.factors .gamma sub { font-size: 9px; }
.factors thead .lead { text-align: left; padding-left: 1px; }

.vbar { width: 13px; flex: none; background: #dfebf4; display: flex; flex-direction: column; align-items: center; padding: 6px 0 7px; }
.vthumb { width: 9px; height: 19px; border: 1px solid #a6b8c6; border-radius: 4px; background: #fff; margin: 230px 0 auto; }
.up, .down { border: 3px solid transparent; }
.up { border-bottom: 4px solid #8fa7ba; border-top: 0; }
.down { border-top: 4px solid #6fa0b8; border-bottom: 0; }
.hbar { display: flex; align-items: center; height: 14px; flex: none; background: #e1ecf3; border-top: 1px solid #c3cfd8; padding: 0 17px 0 5px; }
.left, .right { border: 3px solid transparent; }
.left { border-right: 4px solid #8fa7ba; border-left: 0; }
.right { border-left: 4px solid #8fa7ba; border-right: 0; }
.hthumb { flex: 1; height: 9px; margin: 0 69px 0 57px; border: 1px solid #a9bac6; border-radius: 5px; background: #fff; text-align: center; font-size: 6px; line-height: 6px; color: #8798a5; }
.status { display: flex; align-items: center; height: 28px; flex: none; background: #d5e2ec; border-top: 2px solid #8e9aa4; padding: 0 2px 0 10px; }
.pages { width: 34px; }
.dot { width: 9px; height: 9px; border-radius: 50%; background: #0b7d1a; flex: none; }
.status label { white-space: nowrap; }
.status .dot + label { margin-left: 13px; border-left: 1px solid #a5b5c1; padding-left: 10px; line-height: 18px; }
.status input { width: 100px; height: 19px; background: #fff; border: 1px solid #bccad5; border-radius: 3px; margin: 0 4px; flex: 0 1 auto; min-width: 0; }
.arr { width: 20px; }
.arr + label { margin-left: 5px; }
.opts { gap: 8px; margin-left: 2px; }
.pct { margin-left: auto; margin-right: 6px; }
.view { width: 18px; height: 18px; }
.view.on { border: 1px solid #8796a3; background: #e9eff3; margin-right: 2px; }
.resize { align-self: flex-end; margin-left: 4px; }

/* Acrobat window */
.acrobat { display: flex; flex-direction: column; min-width: 0; min-height: 0; background: #f9f9f9; border-left: 2px solid #b9b9b9; border-top: 1px solid #9a9a9a; color: #333; }
.ac-title { display: flex; align-items: center; height: 24px; flex: none; padding: 2px 21px 0 6px; background: #fdfdfd; }
.ac-title h1 { flex: 1; min-width: 0; font-size: 10px; color: #8e8e8e; margin-left: 4px; white-space: nowrap; overflow: hidden; }
.ac-title button { width: 39px; }
.ac-title button:last-child { width: 9px; margin-left: 15px; }
.ac-menu { display: flex; gap: 11px; height: 19px; flex: none; padding-left: 4px; color: #444; border-bottom: 1px solid #d0d0d0; }
.ac-tabs { display: flex; height: 31px; flex: none; background: #e9e9e9; font-family: "Open Sans", sans-serif; font-size: 12px; border-bottom: 1px solid #d0d0d0; color: #444; }
.home { width: 53px; }
.toolsTab { width: 107px; }
.file { display: flex; width: 151px; height: 31px; padding-left: 14px; justify-content: center; gap: 10px; background: #fafafa; border: solid #d0d0d0; border-width: 0 1px; margin-left: 9px; font-size: 11px; }
.account { margin-left: auto; display: flex; align-items: center; gap: 16px; padding-right: 12px; }
.ac-toolbar { display: flex; align-items: center; height: 41px; flex: none; border-bottom: 1px solid #cfcfcf; padding: 0 12px 0 10px; gap: 17px; background: #fafafa; }
.page { width: 31px; height: 24px; text-align: center; border-bottom: 1px solid #bbb; margin-left: -2px; }
.total { margin-left: -11px; padding-right: 16px; border-right: 1px solid #ccc; line-height: 24px; white-space: nowrap; }
.zoom { position: relative; display: flex; align-items: center; border-bottom: 1px solid #ccc; width: 52px; height: 24px; flex: none; }
.zoom select { appearance: none; width: 100%; padding-left: 6px; }
.zoom .caret { position: absolute; right: 6px; pointer-events: none; }
.more { margin-left: 2px; }
.sharing { margin-left: auto; display: flex; gap: 17px; }
.ac-body { flex: 1; min-height: 0; display: flex; }
.gutter { width: 13px; flex: none; background: #dadada; }
.gutter i { border: 4px solid transparent; }
.gl i { border-left: 5px solid #777; border-right: 0; }
.gr { width: 16px; background: #e8e8e8; border-right: 1px solid #ccc; }
.gr i { border-right: 5px solid #777; border-left: 0; }
.viewer { flex: 1; min-width: 0; display: flex; flex-direction: column; }
.viewrow { flex: 1; min-height: 0; display: flex; }
.pdf { flex: 1; min-width: 0; overflow: hidden; background: #fff; font-family: Lato, "Open Sans", sans-serif; font-size: 13px; color: #333; }
.one { display: flow-root; height: 470px; border-bottom: 5px solid #9a9a9a; }
.one p { line-height: 32px; padding-left: 64px; white-space: nowrap; }
.one p:first-child { margin-top: -16px; }
.one .f { padding-left: 199px; display: flex; }
.one .f > span:first-child { width: 161px; }
.one .f:not(:has(span)) { display: block; }
.book { width: 515px; margin: 9px 0 0 23px; }
.book th, .book td { border: 1px solid #333; padding: 0; text-align: center; font-size: 13px; line-height: 13px; white-space: nowrap; }
.book th { font-weight: 400; font-size: 11px; line-height: 14px; vertical-align: top; height: 43px; padding-top: 1px; }
.book th:nth-child(3), .book th:nth-child(4) { font-size: 10px; }
.book tr td:first-child { text-align: left; padding-left: 5px; font-size: 11px; }
.book th:first-child { font-size: 12px; line-height: 17px; }
.book tbody tr { height: 15px; }
.book .bm { font-size: 10px; line-height: 13px; }
.book .bm .eq { display: flex; justify-content: center; font-size: 9px; line-height: 11px; height: 27px; }
.book .frac > span { padding: 1px 0; }
.book .bm sub { top: 2px; }
.two { padding: 40px 0 0 93px; }
.num { font-size: 15px; line-height: 20px; padding-left: 236px; }
.running { display: flex; justify-content: space-between; align-items: flex-end; border-bottom: 1px solid #555; padding: 0 0 2px 11px; line-height: 14px; font-size: 12px; white-space: nowrap; margin-top: -2px; }
.running em + em { margin-right: -14px; font-size: 13px; }
.two h2 { padding: 10px 0 0 11px; font-size: 12px; line-height: 18px; font-weight: 700; text-decoration: underline; }
.next { padding: 9px 0 0 11px; font-size: 12px; line-height: 18px; white-space: nowrap; }
.ac-vbar { width: 13px; flex: none; background: #f0f0f0; display: flex; flex-direction: column; align-items: center; padding: 5px 0; }
.ac-vbar i { width: 13px; height: 15px; background: #cdcdcd; margin: auto 0 125px; }
.ac-hbar { height: 11px; flex: none; display: flex; background: #f0f0f0; overflow: hidden; }
.ac-hbar span { width: 111px; padding-left: 16px; line-height: 13px; background: #e6e6e6; white-space: nowrap; }
.ac-hbar button { width: 14px; }
.ac-hbar i { flex: 1; margin: 0 84px 0 31px; background: #cdcdcd; }
.rail { width: 37px; flex: none; display: flex; flex-direction: column; background: #fafafa; }
.rail button { height: 40px; flex: none; }
.rail hr { width: 24px; border: 0; border-top: 1px solid #ccc; margin: 0 auto; flex: none; }
.fill { flex: 1; }
</style>
